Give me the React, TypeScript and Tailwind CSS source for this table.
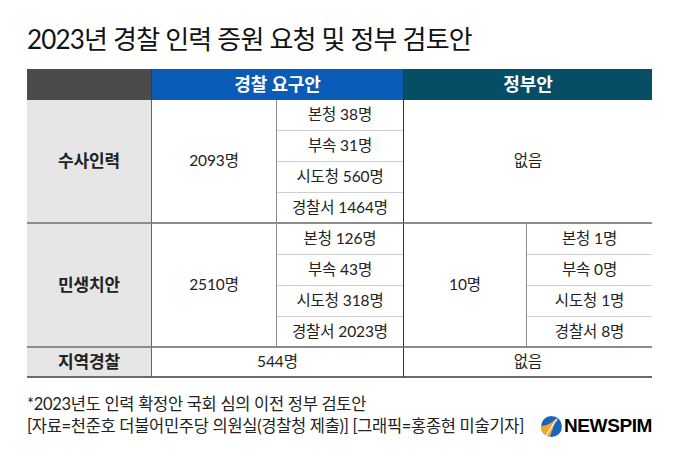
const font = { fontFamily: '"Lato", "Noto Sans CJK KR", sans-serif' }

const sub = 'flex items-center justify-center border-b border-[#cfcfcf]'
const subLast = 'flex items-center justify-center border-b-2 border-[#8c8c8c]'

const Logo = () => (
  <svg width="21" height="21" viewBox="0 0 20 20">
    <defs>
      <clipPath id="c">
        <circle cx="10" cy="10" r="10" />
      </clipPath>
    </defs>
    <circle cx="10" cy="10" r="10" fill="#1766bd" />
    <g clipPath="url(#c)">
      <path d="M0 9 C5 10 10 7 15 2 L8 21 L0 21 Z" fill="#f4a52a" />
      <path d="M4 20 C8 14 11 8 15.5 3" stroke="#fff" strokeWidth="1.2" fill="none" />
    </g>
  </svg>
)

export default function App() {
  return (
    <div className="w-[680px] h-[460px] bg-white text-[#222] overflow-hidden" style={font}>
      <h1 className="pl-[27px] pt-[22px] text-[26px] leading-[34px] tracking-[-0.8px] text-[#111]">
        2023년 경찰 인력 증원 요청 및 정부 검토안
      </h1>

      <div className="ml-[27px] mt-[13px] grid grid-cols-[125px_125px_126px_124px_125px] grid-rows-[31px_repeat(8,31px)_30px] text-[15.5px] tracking-[-0.1px]">
        {/* header */}
        <div className="bg-[#4b4b4b] border-r border-[#3a3a3a]" />
        <div className="col-span-2 bg-[#0b5cb6] text-white text-[18px] font-bold flex items-center justify-center">경찰 요구안</div>
        <div className="col-span-2 bg-[#064e66] text-white text-[18px] font-bold flex items-center justify-center border-l border-[#333]">정부안</div>

        {/* 수사인력 */}
        <div className="row-span-4 bg-[#e6e6e6] border-r border-[#666] border-b-2 border-b-[#8c8c8c] flex items-center justify-center text-[17px] font-bold">수사인력</div>
        <div className="row-span-4 border-r border-[#8c8c8c] border-b-2 border-b-[#8c8c8c] flex items-center justify-center">2093명</div>
        <div className={sub}>본청 38명</div>
        <div className="col-span-2 row-span-4 col-start-4 row-start-2 border-l border-[#333] border-b-2 border-b-[#8c8c8c] flex items-center justify-center">없음</div>
        <div className={`${sub} col-start-3`}>부속 31명</div>
        <div className={`${sub} col-start-3`}>시도청 560명</div>
        <div className={`${subLast} col-start-3`}>경찰서 1464명</div>

        {/* 민생치안 */}
        <div className="row-span-4 bg-[#e6e6e6] border-r border-[#666] border-b-2 border-b-[#8c8c8c] flex items-center justify-center text-[17px] font-bold">민생치안</div>
        <div className="row-span-4 border-r border-[#8c8c8c] border-b-2 border-b-[#8c8c8c] flex items-center justify-center">2510명</div>
        <div className={sub}>본청 126명</div>
        <div className="row-span-4 border-l border-[#333] border-r border-r-[#8c8c8c] border-b-2 border-b-[#8c8c8c] flex items-center justify-center">10명</div>
        <div className={sub}>본청 1명</div>
        <div className={`${sub} col-start-3`}>부속 43명</div>
        <div className={`${sub} col-start-5`}>부속 0명</div>
        <div className={`${sub} col-start-3`}>시도청 318명</div>
        <div className={`${sub} col-start-5`}>시도청 1명</div>
        <div className={`${subLast} col-start-3`}>경찰서 2023명</div>
        <div className={`${subLast} col-start-5`}>경찰서 8명</div>

        {/* 지역경찰 */}
        <div className="bg-[#e6e6e6] border-r border-[#666] border-b-2 border-b-[#6a6a6a] flex items-center justify-center text-[17px] font-bold">지역경찰</div>
        <div className="col-span-2 border-b-2 border-[#6a6a6a] flex items-center justify-center">544명</div>
        <div className="col-span-2 border-l border-[#333] border-b-2 border-b-[#6a6a6a] flex items-center justify-center">없음</div>
      </div>

      <div className="ml-[27px] mr-[28px] mt-[15px] flex items-end justify-between text-[16.5px] leading-[22px] tracking-[-0.3px] text-[#222]">
        <div>
          <p>*2023년도 인력 확정안 국회 심의 이전 정부 검토안</p>
          <p>[자료=천준호 더불어민주당 의원실(경찰청 제출)] [그래픽=홍종현 미술기자]</p>
        </div>
        <div className="flex items-center gap-[2px]">
          <Logo />
          <span className="text-[19px] leading-[22px] font-bold tracking-[-0.4px] text-black" style={{ fontFamily: '"Liberation Sans", sans-serif' }}>
            NEWSPIM
          </span>
        </div>
      </div>
    </div>
  )
}
